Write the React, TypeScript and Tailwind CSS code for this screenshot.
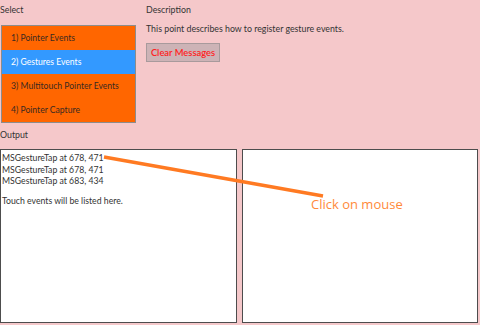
import React from "react";

const items = [
  "1) Pointer Events",
  "2) Gestures Events",
  "3) Multitouch Pointer Events",
  "4) Pointer Capture",
];

const logLines = [
  "MSGestureTap at 678, 471",
  "MSGestureTap at 678, 471",
  "MSGestureTap at 683, 434",
];

const App = () => {
  const selected = 1;

  return (
    <div
      className="relative w-[480px] h-[325px] overflow-hidden bg-[#f5c8ca] text-[#333] text-[8.8px] leading-[12px]"
      style={{ fontFamily: 'Lato, "Noto Sans", sans-serif' }}
    >
      {/* top area */}
      <div className="flex pt-[4px]">
        <div className="w-[146px] shrink-0">
          <div className="h-[12px]">Select</div>
          <div className="mt-[9px] ml-px w-[135px] border border-[#8c8c8c] bg-[#ff6600] text-[8.6px]">
            {items.map((item, i) => (
              <div
                key={item}
                className={`h-[24px] flex items-center pl-[9px] ${
                  i === selected ? "bg-[#3399ff] text-white" : "text-[#3a2a20]"
                }`}
              >
                {item}
              </div>
            ))}
          </div>
        </div>
        <div className="flex-1">
          <div className="h-[12px]">Description</div>
          <div className="mt-[7px]">
            This point describes how to register gesture events.
          </div>
          <button className="mt-[8px] w-[74px] h-[19px] border border-[#a89a9c] bg-[#cdb3b6] text-[#ff2222] font-semibold text-[9.4px] flex items-center justify-center">
            Clear Messages
          </button>
        </div>
      </div>

      {/* output */}
      <div className="mt-[6px] h-[12px]">Output</div>
      <div className="mt-[8px] flex gap-[5px]">
        <div className="w-[237px] h-[174px] bg-white border border-[#4d4d4d] px-[1px] pt-[2px] text-[8.7px] leading-[11.5px]">
          {logLines.map((l, i) => (
            <div key={i}>{l}</div>
          ))}
          <div className="mt-[8px]">Touch events will be listed here.</div>
        </div>
        <div className="w-[236px] h-[174px] bg-white border border-[#4d4d4d]" />
      </div>

      {/* annotation overlay */}
      <svg
        className="absolute left-0 top-0 pointer-events-none"
        width="480"
        height="325"
      >
        <line
          x1="104"
          y1="157"
          x2="323"
          y2="196"
          stroke="#ff7a22"
          strokeWidth="3.5"
        />
      </svg>
      <div
        className="absolute left-[311px] top-[196px] text-[13px] leading-[16px] text-[#ff8a3a]"
        style={{ fontFamily: '"Open Sans", sans-serif' }}
      >
        Click on mouse
      </div>
    </div>
  );
};

export default App;
